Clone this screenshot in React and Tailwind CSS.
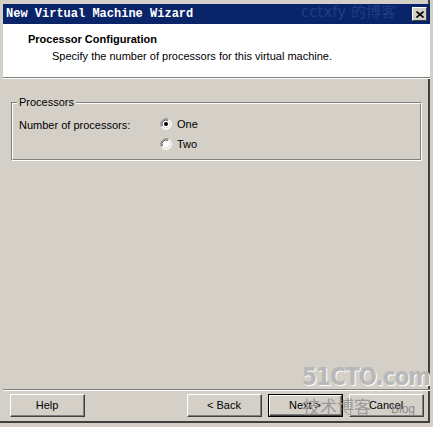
import React from 'react'

const ui = { fontFamily: '"Liberation Sans", Arial, sans-serif' }

const Radio = ({ checked }) => (
  <svg width="12" height="12" viewBox="0 0 12 12" className="shrink-0">
    <circle cx="6" cy="6" r="5.5" fill="#ffffff" />
    <path d="M1.2 8.5 A5.5 5.5 0 0 1 8.5 1.2" fill="none" stroke="#808080" strokeWidth="1" />
    <path d="M2.4 8.2 A4.3 4.3 0 0 1 8.2 2.4" fill="none" stroke="#404040" strokeWidth="1" />
    <path d="M10.8 3.5 A5.5 5.5 0 0 1 3.5 10.8" fill="none" stroke="#ffffff" strokeWidth="1" />
    <path d="M9.6 3.8 A4.3 4.3 0 0 1 3.8 9.6" fill="none" stroke="#d4d0c8" strokeWidth="1" />
    {checked && <circle cx="6" cy="6" r="2" fill="#000000" />}
  </svg>
)

const Button = ({ children, primary }) => (
  <div className={`w-[75px] h-[23px] ${primary ? 'border border-black' : ''}`}>
    <div className="w-full h-full border-t border-l border-white border-r border-b border-r-[#404040] border-b-[#404040]">
      <div className="w-full h-full border-r border-b border-[#808080] flex items-center justify-center text-[11px] text-black">
        {children}
      </div>
    </div>
  </div>
)

export default function App() {
  return (
    <div className="w-[433px] h-[427px] bg-[#d4d0c8] flex flex-col" style={ui}>
      <div className="flex flex-col w-[430px] h-[423px] pt-[4px] pl-[3px] border-r-[2px] border-b-[2px] border-[#404040]">
        {/* Title bar */}
        <div className="relative h-[20px] w-[427px] bg-[#0a246a] flex items-center pl-[3px] pr-[3px]">
          <span
            className="text-white font-bold text-[12px]"
            style={{ fontFamily: '"Liberation Mono", "Courier New", monospace' }}
          >
            New Virtual Machine Wizard
          </span>
          <span
            className="absolute left-[298px] top-[-3px] text-[15px] text-[#1e3c86]"
            style={{ fontFamily: '"DejaVu Sans", "Noto Sans CJK SC", sans-serif' }}
          >
            cctxfy 的博客
          </span>
          <div className="ml-auto relative w-[15px] h-[14px] bg-[#d4d0c8] border-t border-l border-white border-r border-b border-r-[#404040] border-b-[#404040] flex items-center justify-center">
            <svg width="8" height="7" viewBox="0 0 8 7">
              <path d="M0.5 0.5 L7.5 6.5 M7.5 0.5 L0.5 6.5" stroke="#000" strokeWidth="1.6" />
            </svg>
          </div>
        </div>

        {/* Header */}
        <div className="w-[427px] h-[53px] bg-white pl-[25px] pt-[8px]">
          <div className="text-[11px] font-bold text-black leading-[14px]">Processor Configuration</div>
          <div className="text-[11px] text-black leading-[14px] mt-[3px] pl-[24px]">
            Specify the number of processors for this virtual machine.
          </div>
        </div>
        <div className="w-[427px] h-px bg-[#808080]" />
        <div className="w-[427px] h-px bg-white" />

        {/* Body */}
        <div className="flex-1 w-[427px] flex flex-col">
          <div className="mt-[23px] ml-[8px] w-[411px] h-[59px] relative border-t border-l border-[#808080] border-r border-b border-r-white border-b-white">
            <div className="w-full h-full border-t border-l border-white border-r border-b border-r-[#808080] border-b-[#808080] pl-[6px] pt-[13px]">
              <div className="flex">
                <div className="w-[141px] text-[11px] leading-[14px] pt-[1px]">Number of processors:</div>
                <div className="flex flex-col gap-[6px]">
                  <div className="flex items-center gap-[5px] text-[11px] leading-[14px]">
                    <Radio checked />
                    <span>One</span>
                  </div>
                  <div className="flex items-center gap-[5px] text-[11px] leading-[14px]">
                    <Radio />
                    <span>Two</span>
                  </div>
                </div>
              </div>
            </div>
            <span className="absolute left-[5px] top-[-8px] px-[2px] bg-[#d4d0c8] text-[11px] leading-[14px]">
              Processors
            </span>
          </div>
        </div>

        {/* Footer */}
        <div className="w-[427px] h-px bg-[#808080]" />
        <div className="w-[427px] h-px bg-white" />
        <div className="relative w-[427px] flex items-center pl-[7px] pr-[6px] pt-[3px] pb-[4px]">
          <Button>Help</Button>
          <div className="ml-auto flex gap-[6px]">
            <Button>&lt; Back</Button>
            <Button primary>Next &gt;</Button>
            <Button>Cancel</Button>
          </div>
          <span
            className="absolute left-[300px] top-[2px] text-[17px] text-[#9a9a9a]"
            style={{ fontFamily: '"Noto Sans CJK SC", sans-serif' }}
          >
            技术博客
          </span>
          <span className="absolute left-[388px] top-[9px] text-[12px] text-[#8a8a8a]">Blog</span>
          <span
            className="absolute left-[299px] top-[-26px] text-[24px] font-bold text-[#b8b8b8] leading-[24px] tracking-[-1px]"
            style={{ fontFamily: '"DejaVu Sans Condensed", "Liberation Sans Narrow", sans-serif', textShadow: '1px 1px 0 #ffffff' }}
          >
            51CTO.com
          </span>
        </div>
      </div>
    </div>
  )
}
